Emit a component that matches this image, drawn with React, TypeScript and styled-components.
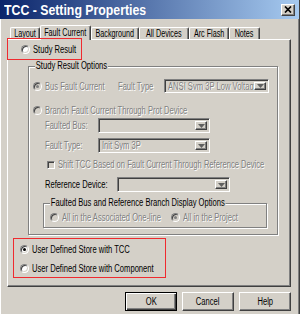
import React from "react";
import styled, { createGlobalStyle } from "styled-components";

const FONT = `"Liberation Sans", Arial, sans-serif`;

const Global = createGlobalStyle`
  html, body { margin: 0; padding: 0; background: #d4d0c8; }
  body { font-family: ${FONT}; }
`;

const Window = styled.div`
  width: 300px;
  height: 314px;
  box-sizing: border-box;
  background: #d4d0c8;
  border-right: 1px solid #404040;
  box-shadow: inset 1px 0 0 #fff, inset -1px 0 0 #808080;
  display: flex;
  flex-direction: column;
  overflow: hidden;
  font-family: ${FONT};
  font-size: 10px;
  color: #000;
`;

/* The reference is a horizontally condensed capture: text is squeezed. */
const Squeeze = styled.span<{ $s?: number; $origin?: string }>`
  display: inline-block;
  white-space: nowrap;
  transform: scaleX(${(p) => p.$s ?? 0.76});
  transform-origin: ${(p) => p.$origin ?? "left center"};
`;

const TitleBar = styled.div`
  height: 19px;
  flex: none;
  display: flex;
  align-items: center;
  justify-content: space-between;
  padding: 0 4px 0 4px;
  background: linear-gradient(90deg, #0a246a 0%, #a6caf0 100%);
`;

const Title = styled(Squeeze)`
  color: #fff;
  font-size: 15px;
  font-weight: bold;
`;

const CloseButton = styled.div`
  width: 14px;
  height: 12px;
  box-sizing: border-box;
  background: #d4d0c8;
  border: 1px solid;
  border-color: #fff #404040 #404040 #fff;
  box-shadow: inset -1px -1px 0 #808080;
  display: flex;
  align-items: center;
  justify-content: center;
`;

const Body = styled.div`
  flex: 1;
  display: flex;
  flex-direction: column;
  padding: 6px 8px 0 7px;
`;

const TabStrip = styled.div`
  height: 14px;
  display: flex;
  align-items: flex-end;
  padding-left: 3px;
`;

const Tab = styled.div<{ $w: number; $active?: boolean }>`
  width: ${(p) => p.$w}px;
  height: ${(p) => (p.$active ? 15 : 12)}px;
  margin-bottom: ${(p) => (p.$active ? -1 : 0)}px;
  padding-bottom: ${(p) => (p.$active ? 2 : 0)}px;
  box-sizing: border-box;
  border-left: 1px solid #fff;
  border-top: 1px solid #fff;
  border-right: 1px solid #404040;
  box-shadow: inset -1px 0 0 #808080;
  border-radius: 2px 2px 0 0;
  background: #d4d0c8;
  display: flex;
  align-items: center;
  justify-content: center;
  white-space: nowrap;
  position: relative;
  z-index: ${(p) => (p.$active ? 2 : 0)};
`;

const Panel = styled.div`
  height: 248px;
  box-sizing: border-box;
  border-top: 1px solid #fff;
  border-left: 1px solid #fff;
  border-right: 1px solid #404040;
  border-bottom: 1px solid #404040;
  box-shadow: inset -1px -1px 0 #808080;
  display: flex;
  flex-direction: column;
  align-items: flex-start;
`;

const RedBox = styled.div<{ $w: number; $h: number }>`
  width: ${(p) => p.$w}px;
  height: ${(p) => p.$h}px;
  box-sizing: border-box;
  border: 1px solid #ef2a2f;
  position: relative;
  z-index: 3;
  display: flex;
  flex-direction: column;
`;

const StudyBox = styled(RedBox)`
  margin: -2px 0 0 -1px;
  justify-content: center;
  padding-left: 13px;
`;

const StoreBox = styled(RedBox)`
  margin: 3px 0 0 5px;
  padding: 2px 0 0 6px;
`;

const Group = styled.div<{ $w: number; $h: number }>`
  position: relative;
  width: ${(p) => p.$w}px;
  height: ${(p) => p.$h}px;
  box-sizing: border-box;
  border: 1px solid #808080;
  box-shadow: inset 1px 1px 0 #fff, 1px 1px 0 #fff;
  display: flex;
  flex-direction: column;
`;

const OptionsGroup = styled(Group)`
  margin: 6px 0 0 20px;
  padding: 11px 0 0 4px;
`;

const DisplayGroup = styled(Group)`
  margin: 11px 0 0 10px;
  flex-direction: row;
  align-items: center;
  padding: 3px 0 0 6px;
`;

const GroupLabel = styled(Squeeze)`
  position: absolute;
  top: -7px;
  left: 6px;
  padding: 0 1px;
  background: #d4d0c8;
  line-height: 12px;
`;

const Row = styled.div<{ $h: number; $mt?: number; $ml?: number }>`
  display: flex;
  align-items: center;
  height: ${(p) => p.$h}px;
  margin-top: ${(p) => p.$mt ?? 0}px;
  margin-left: ${(p) => p.$ml ?? 0}px;
`;

const Text = styled(Squeeze)<{ $disabled?: boolean; $w?: number }>`
  color: ${(p) => (p.$disabled ? "#808080" : "#000")};
  text-shadow: ${(p) => (p.$disabled ? "1px 1px 0 #fff" : "none")};
  ${(p) => (p.$w ? `width: ${p.$w}px; flex: none;` : "")}
`;

const Option = styled.label<{ $w?: number }>`
  display: flex;
  align-items: center;
  gap: 3px;
  height: 16px;
  ${(p) => (p.$w ? `width: ${p.$w}px; flex: none;` : "")}
`;

const RadioDot = styled.span<{ $checked?: boolean; $disabled?: boolean }>`
  width: 9px;
  height: 9px;
  flex: none;
  box-sizing: border-box;
  border-radius: 50%;
  border: 1px solid;
  border-color: #808080 #fff #fff #808080;
  box-shadow: inset 1px 1px 0 #404040, inset -1px -1px 0 #d4d0c8;
  background: ${(p) => (p.$disabled ? "#d4d0c8" : "#fff")};
  display: flex;
  align-items: center;
  justify-content: center;
  &::after {
    content: "";
    width: 3px;
    height: 3px;
    border-radius: 50%;
    background: ${(p) => (p.$disabled ? "#808080" : "#000")};
    display: ${(p) => (p.$checked ? "block" : "none")};
  }
`;

const CheckBox = styled.span`
  width: 8px;
  height: 8px;
  flex: none;
  box-sizing: border-box;
  border: 1px solid;
  border-color: #808080 #fff #fff #808080;
  box-shadow: inset 1px 1px 0 #404040;
  background: #d4d0c8;
`;

const CheckOption = styled.label`
  display: flex;
  align-items: center;
  gap: 3px;
`;

const SelectBox = styled.div<{ $w: number; $h: number }>`
  width: ${(p) => p.$w}px;
  height: ${(p) => p.$h}px;
  flex: none;
  box-sizing: border-box;
  border: 1px solid;
  border-color: #808080 #fff #fff #808080;
  box-shadow: inset 1px 1px 0 #404040, inset -1px -1px 0 #d4d0c8;
  background: #d4d0c8;
  padding: 2px;
  display: flex;
  align-items: stretch;
`;

const SelectValue = styled.span`
  flex: 1;
  overflow: hidden;
  display: flex;
  align-items: center;
  padding-left: 1px;
`;

const ArrowButton = styled.span`
  width: 12px;
  flex: none;
  box-sizing: border-box;
  border: 1px solid;
  border-color: #fff #404040 #404040 #fff;
  box-shadow: inset -1px -1px 0 #808080;
  display: flex;
  align-items: center;
  justify-content: center;
`;

const ButtonRow = styled.div`
  display: flex;
  justify-content: flex-end;
  gap: 5px;
  margin-top: 5px;
`;

const Button = styled.button<{ $default?: boolean }>`
  width: 52px;
  height: 19px;
  box-sizing: border-box;
  padding: 0;
  background: #d4d0c8;
  font-family: ${FONT};
  font-size: 10px;
  color: #000;
  display: flex;
  align-items: center;
  justify-content: center;
  border: 1px solid;
  border-color: ${(p) => (p.$default ? "#000" : "#fff #404040 #404040 #fff")};
  box-shadow: ${(p) =>
    p.$default
      ? "inset 1px 1px 0 #fff, inset -1px -1px 0 #404040, inset -2px -2px 0 #808080"
      : "inset -1px -1px 0 #808080"};
`;

const Arrow = () => (
  <svg width="7" height="4" viewBox="0 0 7 4">
    <path d="M0 0h7L3.5 4z" fill="#606060" />
  </svg>
);

const Select = ({ w, h, value }: { w: number; h: number; value?: string }) => (
  <SelectBox $w={w} $h={h}>
    <SelectValue>{value && <Text $disabled>{value}</Text>}</SelectValue>
    <ArrowButton>
      <Arrow />
    </ArrowButton>
  </SelectBox>
);

const Radio = ({
  label,
  checked,
  disabled,
  w,
}: {
  label: string;
  checked?: boolean;
  disabled?: boolean;
  w?: number;
}) => (
  <Option $w={w}>
    <RadioDot $checked={checked} $disabled={disabled} />
    <Text $disabled={disabled}>{label}</Text>
  </Option>
);

const tabs = [
  { label: "Layout", w: 30 },
  { label: "Fault Current", w: 51, active: true },
  { label: "Background", w: 48 },
  { label: "All Devices", w: 50 },
  { label: "Arc Flash", w: 40 },
  { label: "Notes", w: 31 },
];

export default function App() {
  return (
    <>
      <Global />
      <Window>
        <TitleBar>
          <Title $s={0.82}>TCC - Setting Properties</Title>
          <CloseButton>
            <svg width="8" height="7" viewBox="0 0 8 7">
              <path d="M1 0.5L7 6.5M7 0.5L1 6.5" stroke="#000" strokeWidth="1.7" />
            </svg>
          </CloseButton>
        </TitleBar>
        <Body>
          <TabStrip>
            {tabs.map((t) => (
              <Tab key={t.label} $w={t.w} $active={t.active}>
                <Squeeze $s={0.72} $origin="center">{t.label}</Squeeze>
              </Tab>
            ))}
          </TabStrip>
          <Panel>
            <StudyBox $w={75} $h={22}>
              <Radio label="Study Result" />
            </StudyBox>

            <OptionsGroup $w={250} $h={169}>
              <GroupLabel>Study Result Options</GroupLabel>
              <Row $h={16}>
                <Radio label="Bus Fault Current" checked disabled w={85} />
                <Text $disabled $w={46}>Fault Type</Text>
                <Select w={105} h={14} value="ANSI Sym 3P Low Voltag" />
              </Row>
              <Row $h={16} $mt={8}>
                <Radio label="Branch Fault Current Through Prot Device" disabled />
              </Row>
              <Row $h={15} $ml={12}>
                <Text $disabled $w={53}>Faulted Bus:</Text>
                <Select w={112} h={15} />
              </Row>
              <Row $h={15} $mt={5} $ml={12}>
                <Text $disabled $w={53}>Fault Type:</Text>
                <Select w={112} h={15} value="Init Sym 3P" />
              </Row>
              <Row $h={15} $mt={4} $ml={14}>
                <CheckOption>
                  <CheckBox />
                  <Text $disabled>Shift TCC Based on Fault Current Through Reference Device</Text>
                </CheckOption>
              </Row>
              <Row $h={15} $mt={5} $ml={12}>
                <Text $w={72}>Reference Device:</Text>
                <Select w={113} h={15} />
              </Row>
              <DisplayGroup $w={224} $h={25}>
                <GroupLabel>Faulted Bus and Reference Branch Display Options</GroupLabel>
                <Radio label="All in the Associated One-line" disabled w={121} />
                <Radio label="All in the Project" checked disabled />
              </DisplayGroup>
            </OptionsGroup>

            <StoreBox $w={153} $h={40}>
              <Radio label="User Defined Store with TCC" checked />
              <Row $h={16} $mt={3}>
                <Radio label="User Defined Store with Component" />
              </Row>
            </StoreBox>
          </Panel>
          <ButtonRow>
            <Button $default>
              <Squeeze $origin="center">OK</Squeeze>
            </Button>
            <Button>
              <Squeeze $origin="center">Cancel</Squeeze>
            </Button>
            <Button>
              <Squeeze $origin="center">Help</Squeeze>
            </Button>
          </ButtonRow>
        </Body>
      </Window>
    </>
  );
}
